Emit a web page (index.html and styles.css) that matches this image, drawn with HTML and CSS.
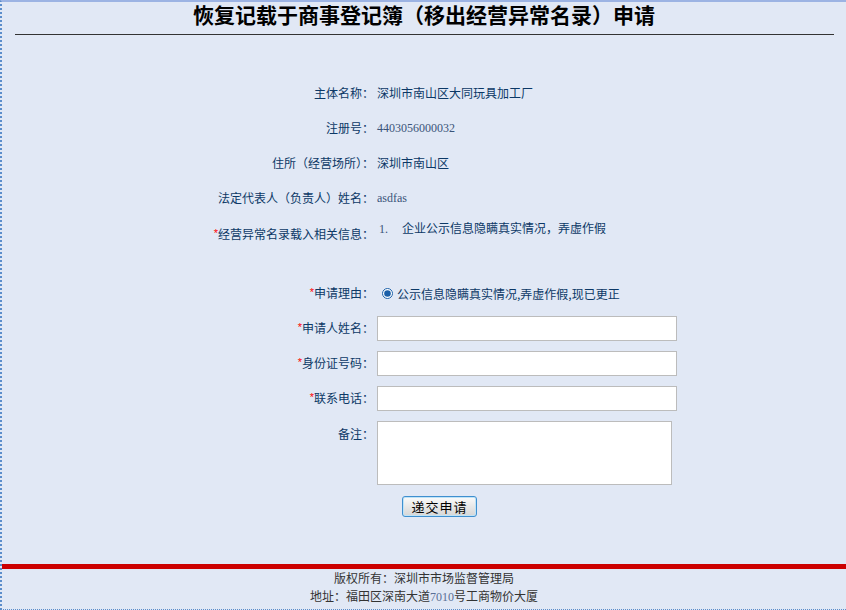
FILE: index.html
```html
<!DOCTYPE html>
<html lang="zh-CN">
<head>
    <meta charset="UTF-8">
    <title>恢复记载于商事登记簿（移出经营异常名录）申请</title>
    <link rel="stylesheet" href="styles.css">
</head>
<body>
    <div class="page">
        <div class="main">
            <h1 class="title">恢复记载于商事登记簿（移出经营异常名录）申请</h1>
            <hr class="rule">

            <div class="info">
                <div class="row">
                    <div class="label">主体名称：</div>
                    <div class="value">深圳市南山区大同玩具加工厂</div>
                </div>
                <div class="row">
                    <div class="label">注册号：</div>
                    <div class="value latin">4403056000032</div>
                </div>
                <div class="row">
                    <div class="label">住所（经营场所）：</div>
                    <div class="value">深圳市南山区</div>
                </div>
                <div class="row">
                    <div class="label">法定代表人（负责人）姓名：</div>
                    <div class="value latin">asdfas</div>
                </div>
                <div class="row row-list">
                    <div class="label"><span class="req">*</span>经营异常名录载入相关信息：</div>
                    <div class="value">
                        <div class="item"><span class="num">1.</span>企业公示信息隐瞒真实情况，弄虚作假</div>
                    </div>
                </div>
            </div>

            <form class="apply">
                <div class="row">
                    <div class="label"><span class="req">*</span>申请理由：</div>
                    <div class="value">
                        <label class="reason"><input type="radio" name="reason" checked>公示信息隐瞒真实情况,弄虚作假,现已更正</label>
                    </div>
                </div>
                <div class="row">
                    <div class="label"><span class="req">*</span>申请人姓名：</div>
                    <div class="value"><input type="text" class="field"></div>
                </div>
                <div class="row">
                    <div class="label"><span class="req">*</span>身份证号码：</div>
                    <div class="value"><input type="text" class="field"></div>
                </div>
                <div class="row">
                    <div class="label"><span class="req">*</span>联系电话：</div>
                    <div class="value"><input type="text" class="field"></div>
                </div>
                <div class="row row-note">
                    <div class="label">备注：</div>
                    <div class="value"><textarea class="note"></textarea></div>
                </div>
                <div class="actions">
                    <button type="button" class="submit-btn">递交申请</button>
                </div>
            </form>
        </div>

        <div class="footer">
            <div>版权所有：深圳市市场监督管理局</div>
            <div>地址：福田区深南大道<span class="latin-num">7010</span>号工商物价大厦</div>
        </div>
    </div>
</body>
</html>
```

FILE: styles.css
```css
html, body {
    margin: 0;
    padding: 0;
}

body {
    background-color: #e1e8f5;
    font-family: "Noto Sans CJK SC", "Liberation Sans", sans-serif;
    font-size: 12px;
    color: #0c3866;
}

.page {
    display: flex;
    flex-direction: column;
    height: 610px;
    box-sizing: border-box;
    border-top: 2px solid #9cb3e3;
    border-left: 2px dotted #5b8dcb;
    border-bottom: 1px dotted #5b8dcb;
}

.main {
    flex: 1;
}

.title {
    margin: 0;
    font-size: 21px;
    line-height: 24px;
    font-weight: bold;
    color: #000;
    text-align: center;
}

.rule {
    margin: 8px 12px 0 13px;
    border: 0;
    border-top: 1px solid #333;
    height: 0;
}

.info {
    margin-top: 40px;
}

.row {
    display: grid;
    grid-template-columns: 372px 1fr;
    column-gap: 3px;
    height: 35px;
    align-items: center;
}

.label {
    text-align: right;
    line-height: 18px;
}

.value {
    line-height: 18px;
}

.latin {
    font-family: "Liberation Serif", serif;
    color: #3a5479;
}

.req {
    color: #f00;
    font-family: "Liberation Sans", sans-serif;
    font-size: 11px;
    position: relative;
    top: -2px;
}

.row-list {
    height: 61px;
    align-items: start;
}

.row-list .label {
    padding-top: 10px;
}

.row-list .value {
    padding-top: 4px;
}

.item .num {
    display: inline-block;
    width: 25px;
    padding-left: 2px;
    box-sizing: border-box;
    font-family: "Liberation Serif", serif;
    color: #3a5479;
}

.reason {
    display: flex;
    align-items: center;
}

.reason input {
    width: 11px;
    height: 11px;
    margin: 0 4px 0 5px;
    accent-color: #1b5fa8;
}

.field {
    display: block;
    width: 300px;
    height: 25px;
    box-sizing: border-box;
    border: 1px solid #bcbcbc;
    background: #fff;
    padding: 2px 4px;
}

.row-note {
    height: auto;
    align-items: start;
    padding-top: 5px;
}

.row-note .label {
    line-height: 25px;
}

.note {
    display: block;
    width: 295px;
    height: 64px;
    box-sizing: border-box;
    border: 1px solid #bcbcbc;
    background: #fff;
    resize: none;
}

.actions {
    margin-top: 11px;
    padding-left: 400px;
}

.submit-btn {
    width: 75px;
    height: 21px;
    padding: 0;
    border: 1px solid #3f8fcf;
    border-radius: 3px;
    background: linear-gradient(#fbfbfb, #e6e6e6 55%, #d6d6d6);
    box-shadow: inset 0 0 0 1px #bfe3f7;
    font-family: "Noto Sans CJK SC", sans-serif;
    font-size: 13px;
    line-height: 19px;
    letter-spacing: 1px;
    color: #000;
    cursor: pointer;
}

.footer {
    border-top: 5px solid #cc0000;
    padding-bottom: 3px;
    text-align: center;
    color: #333;
    line-height: 18px;
}

.latin-num {
    font-family: "Liberation Serif", serif;
    color: #5a6f96;
}
```
